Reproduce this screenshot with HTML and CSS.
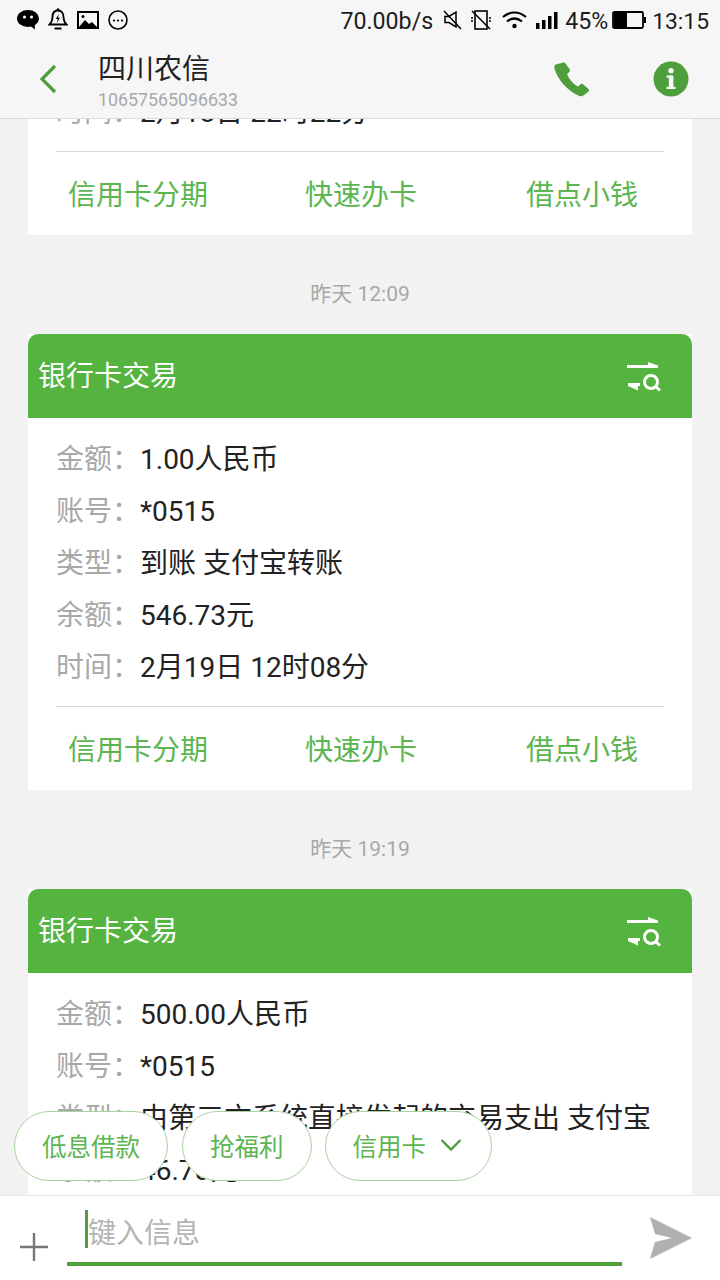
FILE: index.html
```html
<!DOCTYPE html>
<html lang="zh-CN">
<head>
  <meta charset="UTF-8" />
  <meta name="viewport" content="width=device-width, initial-scale=1" />
  <title>四川农信</title>
  <link rel="stylesheet" href="styles.css">
</head>
<body>

<header class="topbar">
  <div class="status">
    <div class="status-left">
      <svg width="22" height="20" viewBox="0 0 22 20"><ellipse cx="11" cy="8.500" rx="11" ry="8.500" fill="#000"/><path d="M12 15l6 4.500-.5-7z" fill="#000"/><circle cx="7.500" cy="7" r="1.600" fill="#f6f6f6"/><circle cx="14.500" cy="7" r="1.600" fill="#f6f6f6"/></svg>
      <svg width="20" height="24" viewBox="0 0 20 24"><path d="M10 2.500c-4 0-5.500 3-5.500 6.500 0 4-1 5.500-3 7.500h17c-2-2-3-3.500-3-7.500 0-3.500-1.500-6.500-5.500-6.500z" fill="none" stroke="#000" stroke-width="1.800"/><path d="M10.800 6l-3 5h2l-1 4 3.200-5.200h-2z" fill="#000"/><path d="M6.500 20.500h7" stroke="#000" stroke-width="2"/><circle cx="10" cy="1.800" r="1.500" fill="#000"/></svg>
      <svg width="22" height="18" viewBox="0 0 22 18"><rect x="1" y="1" width="20" height="16" fill="none" stroke="#000" stroke-width="2"/><path d="M2 16l6-7 4 4 3-2 5 5z" fill="#000"/><circle cx="6" cy="5.500" r="1.500" fill="#000"/></svg>
      <svg width="20" height="20" viewBox="0 0 20 20"><circle cx="10" cy="10" r="9" fill="none" stroke="#000" stroke-width="1.600"/><circle cx="6" cy="10.500" r="1.100" fill="#000"/><circle cx="10" cy="10.500" r="1.100" fill="#000"/><circle cx="14" cy="10.500" r="1.100" fill="#000"/></svg>
    </div>
    <div class="status-right">
      <span class="speed">70.00b/s</span>
      <svg class="ic-mute" width="19" height="20" viewBox="0 0 19 20"><path d="M2 6.500h4l7-4.500v15l-7-4.500h-4z" fill="none" stroke="#000" stroke-width="1.500"/><path d="M1 1l17 18" stroke="#000" stroke-width="1.500"/></svg>
      <svg class="ic-vib" width="22" height="20" viewBox="0 0 22 20"><rect x="5" y="1" width="12" height="18" fill="none" stroke="#000" stroke-width="1.600"/><path d="M2 1l18 18" stroke="#000" stroke-width="1.600"/><path d="M2 7v6M20 7v6" stroke="#000" stroke-width="1.500" stroke-dasharray="2 1"/></svg>
      <svg class="ic-wifi" width="25" height="18" viewBox="0 0 25 18"><path d="M1 6c7-6 16-6 23 0M5 10.500c5-4 10-4 15 0" fill="none" stroke="#000" stroke-width="2.200"/><circle cx="12.500" cy="15" r="2.200" fill="#000"/></svg>
      <svg class="ic-signal" width="22" height="18" viewBox="0 0 22 18"><path d="M0 12h3.500v6h-3.500zM6 9h3.500v9h-3.500zM12 5h3.500v13h-3.500zM18 1h3.500v17h-3.500z" fill="#000"/></svg>
      <span class="pct">45%</span>
      <svg class="ic-batt" width="34" height="18" viewBox="0 0 34 18"><rect x="1" y="1" width="30" height="16" rx="1.500" fill="none" stroke="#000" stroke-width="1.800"/><rect x="2" y="2" width="13" height="14" fill="#000"/><rect x="32" y="6" width="2" height="6" fill="#000"/></svg>
      <span class="clock">13:15</span>
    </div>
  </div>
  <div class="titlebar">
    <svg class="back" width="20" height="30" viewBox="0 0 20 30"><path d="M17 2L4 15l13 13" fill="none" stroke="#4f9e3c" stroke-width="3.200"/></svg>
    <div class="contact">
      <div class="contact-name">四川农信</div>
      <div class="contact-num">10657565096633</div>
    </div>
    <svg class="phone" width="36" height="36" viewBox="0 0 36 36"><path d="M1.500 3.500c-1.200 1-1.500 2.500-.8 4.800 3 10 12 21 24 26.500 1.800.8 3.200.6 4.600-.4l5-3.700c1-.8 1-1.800.2-2.600l-5.500-4.800c-.9-.7-1.800-.6-2.600.1l-2.400 2.200c-4.800-2.500-9-7.500-11-12.500l2.300-2.200c.8-.8.9-1.700.3-2.700l-4.300-6c-.7-.9-1.700-1-2.600-.4z" fill="#4f9e3c"/></svg>
    <svg class="info" width="36" height="36" viewBox="0 0 36 36"><circle cx="18" cy="18" r="17.500" fill="#4f9e3c"/><rect x="15.800" y="14.500" width="4.600" height="13" fill="#f6f6f6"/><rect x="13.500" y="14.500" width="5" height="2.200" fill="#f6f6f6"/><rect x="13.500" y="25.800" width="9" height="2.200" fill="#f6f6f6"/><circle cx="18" cy="9.800" r="2.700" fill="#f6f6f6"/></svg>
  </div>
</header>

<main class="thread">
  <div class="thread-inner">

    <section class="card card-cut">
      <div class="card-body">
        <div class="row"><span class="label">时间：</span><span>2月18日 22时22分</span></div>
      </div>
      <div class="actions">
        <span class="act act-1">信用卡分期</span>
        <span class="act act-2">快速办卡</span>
        <span class="act act-3">借点小钱</span>
      </div>
    </section>

    <div class="stamp">昨天 12:09</div>

    <section class="card">
      <div class="card-head">
        <span>银行卡交易</span>
        <svg class="filter" width="34" height="30" viewBox="0 0 34 30"><path d="M0 3h21v-3l10 3.500v2.500h-31z" fill="#fff"/><path d="M1 21h12v3h-2v4.500l-10-4.500z" fill="#fff"/><circle cx="24" cy="20" r="6.500" fill="none" stroke="#fff" stroke-width="3"/><path d="M28.500 24.500l4.500 4" stroke="#fff" stroke-width="3"/></svg>
      </div>
      <div class="card-body">
        <div class="row"><span class="label">金额：</span><span>1.00人民币</span></div>
        <div class="row"><span class="label">账号：</span><span>*0515</span></div>
        <div class="row"><span class="label">类型：</span><span>到账 支付宝转账</span></div>
        <div class="row"><span class="label">余额：</span><span>546.73元</span></div>
        <div class="row"><span class="label">时间：</span><span>2月19日 12时08分</span></div>
      </div>
      <div class="actions">
        <span class="act act-1">信用卡分期</span>
        <span class="act act-2">快速办卡</span>
        <span class="act act-3">借点小钱</span>
      </div>
    </section>

    <div class="stamp">昨天 19:19</div>

    <section class="card">
      <div class="card-head">
        <span>银行卡交易</span>
        <svg class="filter" width="34" height="30" viewBox="0 0 34 30"><path d="M0 3h21v-3l10 3.500v2.500h-31z" fill="#fff"/><path d="M1 21h12v3h-2v4.500l-10-4.500z" fill="#fff"/><circle cx="24" cy="20" r="6.500" fill="none" stroke="#fff" stroke-width="3"/><path d="M28.500 24.500l4.500 4" stroke="#fff" stroke-width="3"/></svg>
      </div>
      <div class="card-body">
        <div class="row"><span class="label">金额：</span><span>500.00人民币</span></div>
        <div class="row"><span class="label">账号：</span><span>*0515</span></div>
        <div class="row"><span class="label">类型：</span><span>由第三方系统直接发起的交易支出 支付宝</span></div>
        <div class="row"><span class="label">余额：</span><span>46.70元</span></div>
      </div>
    </section>

  </div>

  <div class="chips">
    <span class="chip">低息借款</span>
    <span class="chip">抢福利</span>
    <span class="chip chip-more">信用卡
      <svg width="22" height="14" viewBox="0 0 22 14"><path d="M1.500 2l9.500 9.500 9.500-9.500" fill="none" stroke="#4f9e3c" stroke-width="2.400"/></svg>
    </span>
  </div>
</main>

<footer class="composer">
  <svg class="plus" width="28" height="28" viewBox="0 0 28 28"><path d="M14 0v28M0 14h28" stroke="#777" stroke-width="2.400"/></svg>
  <div class="field">
    <span class="caret"></span>
    <span class="placeholder">键入信息</span>
  </div>
  <svg class="send" width="42" height="42" viewBox="0 0 42 42"><path d="M0 0l42 21-42 21 5-17 17-4-17-4z" fill="#b0b0b0"/></svg>
</footer>

</body>
</html>
```

FILE: styles.css
```css
* {
  box-sizing: border-box;
}
html, body {
  margin: 0;
  padding: 0;
}
body {
  width: 720px;
  height: 1280px;
  overflow: hidden;
  display: flex;
  flex-direction: column;
  font-family: Roboto, 'Noto Sans CJK SC', sans-serif;
  font-size: 28px;
  color: #222;
  background: #f2f2f2;
}

/* top bar */
.topbar {
  flex: none;
  height: 119px;
  background: #f6f6f6;
  border-bottom: 1px solid #dcdcdc;
}
.status {
  height: 42px;
  display: flex;
  justify-content: space-between;
  align-items: center;
  padding: 0 11px 0 17px;
  font-size: 23.200px;
  color: #1c1c1c;
}
.status-left, .status-right {
  display: flex;
  align-items: center;
}
.status-left {
  gap: 9px;
}
.status-left svg, .status-right svg {
  margin-top: -2px;
}
.speed {
  margin-right: 10px;
}
.ic-vib {
  margin-left: 8px;
}
.ic-wifi {
  margin-left: 10px;
}
.ic-signal {
  margin-left: 9px;
}
.pct {
  margin-left: 7px;
}
.ic-batt {
  margin-left: 4px;
}
.clock {
  margin-left: 6px;
  font-size: 22.800px;
}
.titlebar {
  height: 76px;
  display: flex;
  align-items: center;
  padding-left: 38px;
}
.back {
  margin-top: -2px;
}
.contact {
  margin-left: 40px;
  flex: 1;
  margin-top: 4px;
}
.contact-name {
  font-size: 28px;
  line-height: 36px;
}
.contact-num {
  font-size: 17.800px;
  line-height: 24px;
  margin-top: 0;
  color: #a8a8a8;
}
.phone {
  margin-top: -3px;
}
.info {
  margin: -3px 31px 0 63px;
}

/* messages */
.thread {
  flex: 1;
  position: relative;
  overflow: hidden;
}
.thread-inner {
  margin-top: -33px;
  padding: 0 28px;
}
.card {
  background: #fff;
}
.card-head {
  height: 84px;
  background: #55b33f;
  border-radius: 10px 10px 0 0;
  color: #fff;
  display: flex;
  justify-content: space-between;
  align-items: center;
  padding: 0 31px 4px 10px;
}
.filter {
  margin-top: 6px;
}
.card-body {
  padding: 16px 28px 12px;
}
.card-cut .card-body {
  padding-top: 1px;
}
.row {
  height: 52px;
  line-height: 52px;
  white-space: nowrap;
}
.label {
  color: #a8a8a8;
}
.actions {
  height: 84px;
  margin: 0 28px;
  border-top: 1px solid #d8d8d8;
  display: flex;
  align-items: center;
  color: #5cb551;
  padding-bottom: 2px;
}
.act {
  white-space: nowrap;
}
.act-1 {
  margin-left: 12px;
}
.act-2 {
  margin-left: 97px;
}
.act-3 {
  margin-left: 109px;
}
.stamp {
  height: 99px;
  padding-top: 45px;
  text-align: center;
  font-size: 21px;
  line-height: 28px;
  color: #a8a8a8;
}

/* quick replies, over the thread */
.chips {
  position: absolute;
  left: 14px;
  bottom: 14px;
  display: flex;
  gap: 14px;
}
.chip {
  height: 70px;
  padding: 0 27px 2px;
  border: 1px solid #a9d39e;
  border-radius: 35px;
  background: #fff;
  color: #5cb551;
  font-size: 24.500px;
  display: flex;
  align-items: center;
  gap: 14px;
  white-space: nowrap;
}
.chip-more {
  margin-left: -1px;
  padding-right: 29px;
}

/* input */
.composer {
  flex: none;
  height: 85px;
  background: #fff;
  border-top: 1px solid #e8e8e8;
  display: flex;
  align-items: flex-start;
}
.plus {
  margin: 37px 0 0 20px;
}
.field {
  box-sizing: content-box;
  width: 537px;
  height: 52px;
  margin-left: 19px;
  padding: 14px 0 0 18px;
  border-bottom: 4px solid #4fa03b;
  display: flex;
  align-items: flex-start;
}
.caret {
  width: 3px;
  height: 38px;
  background: #4fa03b;
}
.placeholder {
  color: #b4b4b4;
  line-height: 48px;
}
.send {
  margin: 21px 0 0 28px;
}
```
